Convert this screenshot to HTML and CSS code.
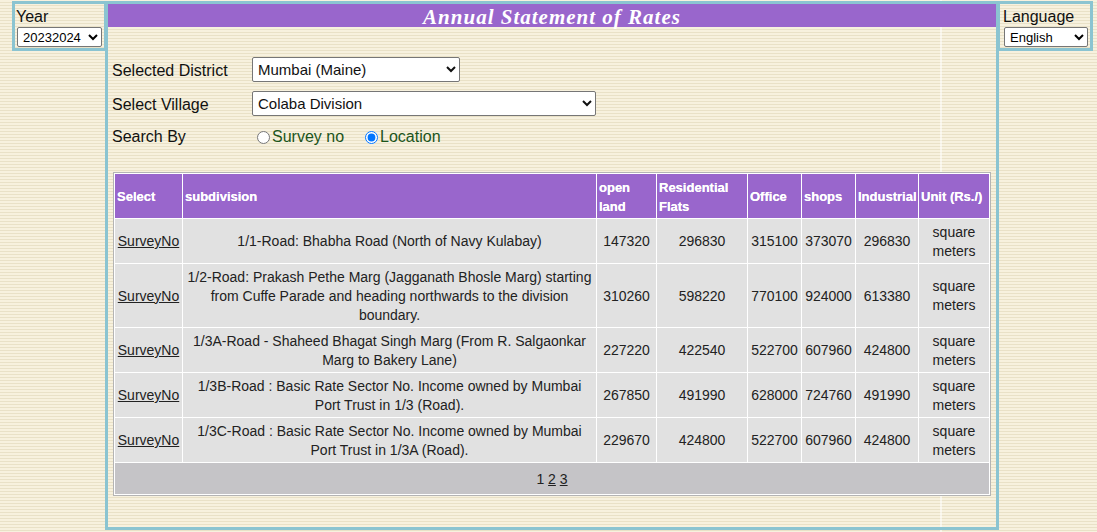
FILE: index.html
```html
<!DOCTYPE html>
<html lang="en">
<head>
<meta charset="utf-8">
<title>Annual Statement of Rates</title>
<link rel="stylesheet" href="styles.css">
</head>
<body>
<div class="page">
  <div class="side side-left">
    <div class="side-label">Year</div>
    <select class="side-select year-select"><option>20232024</option></select>
  </div>
  <div class="main">
    <div class="title">Annual Statement of Rates</div>
    <div class="form">
      <div class="form-label">Selected District</div>
      <div><select class="sel sel-district"><option>Mumbai (Maine)</option></select></div>
      <div class="form-label">Select Village</div>
      <div><select class="sel sel-village"><option>Colaba Division</option></select></div>
      <div class="form-label">Search By</div>
      <div class="radios">
        <label class="radio-opt radio-first"><input type="radio" name="by">Survey no</label>
        <label class="radio-opt"><input type="radio" name="by" checked>Location</label>
      </div>
    </div>
    <table class="rates">
      <thead>
        <tr class="head-row">
          <th class="c-sel">Select</th>
          <th class="c-sub">subdivision</th>
          <th class="c-open">open land</th>
          <th class="c-res">Residential Flats</th>
          <th class="c-off">Office</th>
          <th class="c-shop">shops</th>
          <th class="c-ind">Industrial</th>
          <th class="c-unit">Unit (Rs./)</th>
        </tr>
      </thead>
      <tbody>
        <tr class="row">
          <td><a href="#">SurveyNo</a></td>
          <td>1/1-Road: Bhabha Road (North of Navy Kulabay)</td>
          <td>147320</td><td>296830</td><td>315100</td><td>373070</td><td>296830</td>
          <td>square meters</td>
        </tr>
        <tr class="row row-tall">
          <td><a href="#">SurveyNo</a></td>
          <td>1/2-Road: Prakash Pethe Marg (Jagganath Bhosle Marg) starting from Cuffe Parade and heading northwards to the division boundary.</td>
          <td>310260</td><td>598220</td><td>770100</td><td>924000</td><td>613380</td>
          <td>square meters</td>
        </tr>
        <tr class="row">
          <td><a href="#">SurveyNo</a></td>
          <td>1/3A-Road - Shaheed Bhagat Singh Marg (From R. Salgaonkar Marg to Bakery Lane)</td>
          <td>227220</td><td>422540</td><td>522700</td><td>607960</td><td>424800</td>
          <td>square meters</td>
        </tr>
        <tr class="row">
          <td><a href="#">SurveyNo</a></td>
          <td>1/3B-Road : Basic Rate Sector No. Income owned by Mumbai Port Trust in 1/3 (Road).</td>
          <td>267850</td><td>491990</td><td>628000</td><td>724760</td><td>491990</td>
          <td>square meters</td>
        </tr>
        <tr class="row">
          <td><a href="#">SurveyNo</a></td>
          <td>1/3C-Road : Basic Rate Sector No. Income owned by Mumbai Port Trust in 1/3A (Road).</td>
          <td>229670</td><td>424800</td><td>522700</td><td>607960</td><td>424800</td>
          <td>square meters</td>
        </tr>
        <tr class="pager-row">
          <td colspan="8">1 <a href="#">2</a> <a href="#">3</a></td>
        </tr>
      </tbody>
    </table>
  </div>
  <div class="side side-right">
    <div class="side-label">Language</div>
    <select class="side-select lang-select"><option>English</option></select>
  </div>
</div>
</body>
</html>
```
FILE: styles.css
```css
html, body {
  margin: 0;
  padding: 0;
}
body {
  font-family: "Liberation Sans", Arial, sans-serif;
  color: #111;
  min-height: 532px;
  background:
    linear-gradient(to right, transparent 940px, rgba(255,255,255,0.55) 940px, rgba(255,255,255,0.55) 942px, transparent 942px),
    repeating-linear-gradient(to bottom, #f7f1de 0px, #f7f1de 2px, #e9e1c7 2px, #e9e1c7 3px);
}
.page {
  display: flex;
  align-items: flex-start;
  padding: 1px 0 0 12px;
}
.side {
  box-sizing: border-box;
  height: 50px;
  border: 3px solid #8bc4d1;
}
.side-left {
  width: 95px;
  padding: 3px 0 0 1px;
}
.side-right {
  width: 96px;
  margin-left: -2px;
  padding: 3px 0 0 3px;
}
.side-label {
  font-size: 16px;
  line-height: 20px;
  height: 20px;
  color: #111;
}
.side-select {
  display: block;
  box-sizing: border-box;
  height: 20px;
  font-family: "Liberation Sans", Arial, sans-serif;
  font-size: 13px;
  padding: 0 0 0 1px;
  margin: 0 0 0 1px;
  background: #fff;
  border: 1px solid #767676;
  border-radius: 2px;
  color: #000;
}
.year-select { width: 85px; }
.lang-select { width: 84px; }

.main {
  box-sizing: border-box;
  width: 894px;
  height: 529px;
  margin-left: -2px;
  border: 3px solid #8bc4d1;
}
.title {
  height: 23px;
  background: #9966cc;
  color: #fff;
  text-align: center;
  font-family: "Liberation Serif", "DejaVu Serif", serif;
  font-style: italic;
  font-weight: bold;
  font-size: 21px;
  line-height: 26px;
  letter-spacing: 1px;
}
.form {
  display: grid;
  grid-template-columns: 140px auto;
  grid-auto-rows: auto;
  row-gap: 9px;
  margin: 30px 0 0 4px;
  align-items: center;
}
.form-label {
  font-size: 16px;
  line-height: 20px;
  padding-top: 2px;
  color: #111;
}
.sel {
  display: block;
  box-sizing: border-box;
  height: 25px;
  font-family: "Liberation Sans", Arial, sans-serif;
  font-size: 15px;
  padding: 0 0 0 1px;
  background: #fff;
  border: 1px solid #767676;
  border-radius: 2px;
  color: #111;
}
.sel-district { width: 208px; }
.sel-village { width: 344px; }
.radios {
  display: flex;
  align-items: center;
  height: 20px;
  padding-top: 2px;
}
.radio-opt {
  display: flex;
  align-items: center;
  font-size: 16px;
  line-height: 20px;
  color: #1c551c;
}
.radio-opt input {
  margin: 1px 2px 0 5px;
  width: 13px;
  height: 13px;
}
.radio-first { margin-right: 16px; }

.rates {
  box-sizing: border-box;
  width: 878px;
  margin: 25px 0 0 5px;
  table-layout: fixed;
  border-collapse: separate;
  border-spacing: 1px;
  border: 1px solid #b4b4b4;
  background: #fff;
  font-size: 14px;
  line-height: 19px;
}
.rates th, .rates td {
  box-sizing: border-box;
  padding: 1px 2px 0;
  vertical-align: middle;
}
.rates th {
  background: #9966cc;
  color: #fff;
  font-weight: bold;
  font-size: 13px;
  text-align: left;
  text-shadow: 0 0 0.4px #fff;
}
.c-sel { width: 67px; }
.c-sub { width: 413px; }
.c-open { width: 59px; }
.c-res { width: 90px; }
.c-off { width: 53px; }
.c-shop { width: 53px; }
.c-ind { width: 62px; }
.c-unit { width: 70px; }
.head-row { height: 44px; }
.row { height: 44px; }
.row-tall { height: 63px; }
.rates td {
  background: #e1e1e1;
  color: #222;
  text-align: center;
}
.rates a {
  color: #222;
  text-decoration: underline;
}
.pager-row { height: 31px; }
.pager-row td {
  background: #c5c4c7;
}
```
